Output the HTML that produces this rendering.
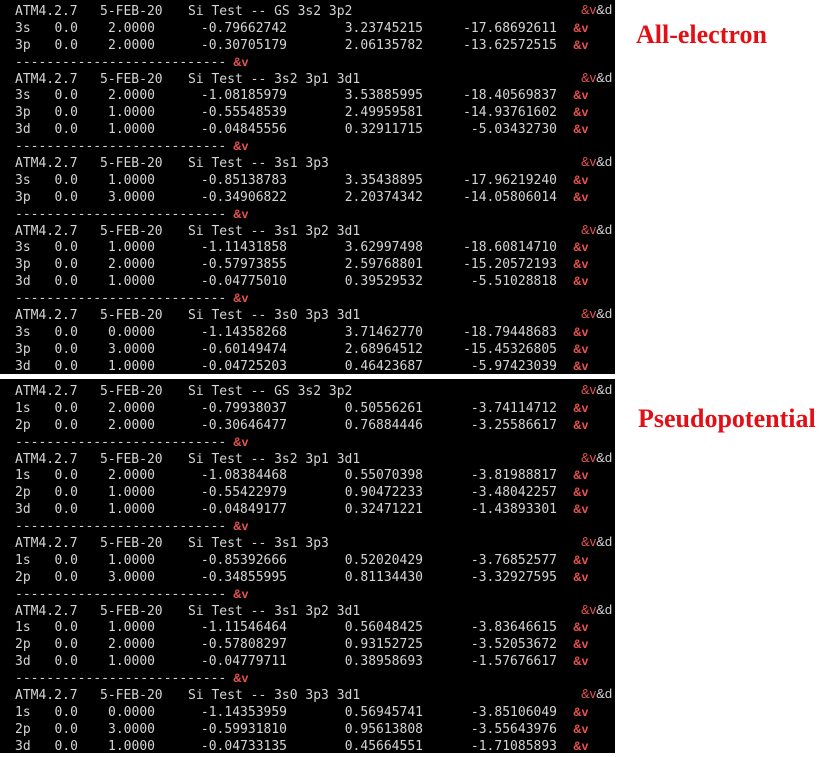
<!DOCTYPE html>
<html><head><meta charset="utf-8"><style>
body{margin:0;background:#fff;width:820px;height:757px;position:relative;overflow:hidden}
.p{position:absolute;left:0;width:615px;background:#000;font:13px "DejaVu Sans Mono","Liberation Mono",monospace;color:#d4d4d4}
.r{position:relative;height:16.9px}
.r i{position:absolute;font-style:normal;top:0;line-height:16px;white-space:pre}
.a{left:15px}.b{right:537px}.c{right:460px}.d{right:328px}.e{right:192px}.f{right:58px}
.r i.v{left:573px;top:-1px;color:#e8534f;font-family:"Liberation Sans",sans-serif;font-weight:bold;font-size:12px}
.h2{left:100px}.h3{left:188px}
.r i.hv{left:581px;top:-2px;font-family:"Liberation Sans",sans-serif;font-size:13px}.hv b{color:#e8534f;font-weight:normal}
.r i.dv{left:233px;top:-1px;color:#e8534f;font-family:"Liberation Sans",sans-serif;font-weight:bold;font-size:12px}
.lab{position:absolute;color:#e30f14;font:bold 26px "Liberation Serif",serif}
</style></head><body>
<div class="p" style="top:0;height:374px;padding-top:4px;box-sizing:border-box">
<div class="r"><i class="a">ATM4.2.7</i><i class="h2">5-FEB-20</i><i class="h3">Si Test -- GS 3s2 3p2</i><i class="hv"><b>&amp;v</b>&amp;d</i></div>
<div class="r"><i class="a">3s</i><i class="b">0.0</i><i class="c">2.0000</i><i class="d">-0.79662742</i><i class="e">3.23745215</i><i class="f">-17.68692611</i><i class="v">&amp;v</i></div>
<div class="r"><i class="a">3p</i><i class="b">0.0</i><i class="c">2.0000</i><i class="d">-0.30705179</i><i class="e">2.06135782</i><i class="f">-13.62572515</i><i class="v">&amp;v</i></div>
<div class="r"><i class="a">---------------------------</i><i class="dv">&amp;v</i></div>
<div class="r"><i class="a">ATM4.2.7</i><i class="h2">5-FEB-20</i><i class="h3">Si Test -- 3s2 3p1 3d1</i><i class="hv"><b>&amp;v</b>&amp;d</i></div>
<div class="r"><i class="a">3s</i><i class="b">0.0</i><i class="c">2.0000</i><i class="d">-1.08185979</i><i class="e">3.53885995</i><i class="f">-18.40569837</i><i class="v">&amp;v</i></div>
<div class="r"><i class="a">3p</i><i class="b">0.0</i><i class="c">1.0000</i><i class="d">-0.55548539</i><i class="e">2.49959581</i><i class="f">-14.93761602</i><i class="v">&amp;v</i></div>
<div class="r"><i class="a">3d</i><i class="b">0.0</i><i class="c">1.0000</i><i class="d">-0.04845556</i><i class="e">0.32911715</i><i class="f">-5.03432730</i><i class="v">&amp;v</i></div>
<div class="r"><i class="a">---------------------------</i><i class="dv">&amp;v</i></div>
<div class="r"><i class="a">ATM4.2.7</i><i class="h2">5-FEB-20</i><i class="h3">Si Test -- 3s1 3p3</i><i class="hv"><b>&amp;v</b>&amp;d</i></div>
<div class="r"><i class="a">3s</i><i class="b">0.0</i><i class="c">1.0000</i><i class="d">-0.85138783</i><i class="e">3.35438895</i><i class="f">-17.96219240</i><i class="v">&amp;v</i></div>
<div class="r"><i class="a">3p</i><i class="b">0.0</i><i class="c">3.0000</i><i class="d">-0.34906822</i><i class="e">2.20374342</i><i class="f">-14.05806014</i><i class="v">&amp;v</i></div>
<div class="r"><i class="a">---------------------------</i><i class="dv">&amp;v</i></div>
<div class="r"><i class="a">ATM4.2.7</i><i class="h2">5-FEB-20</i><i class="h3">Si Test -- 3s1 3p2 3d1</i><i class="hv"><b>&amp;v</b>&amp;d</i></div>
<div class="r"><i class="a">3s</i><i class="b">0.0</i><i class="c">1.0000</i><i class="d">-1.11431858</i><i class="e">3.62997498</i><i class="f">-18.60814710</i><i class="v">&amp;v</i></div>
<div class="r"><i class="a">3p</i><i class="b">0.0</i><i class="c">2.0000</i><i class="d">-0.57973855</i><i class="e">2.59768801</i><i class="f">-15.20572193</i><i class="v">&amp;v</i></div>
<div class="r"><i class="a">3d</i><i class="b">0.0</i><i class="c">1.0000</i><i class="d">-0.04775010</i><i class="e">0.39529532</i><i class="f">-5.51028818</i><i class="v">&amp;v</i></div>
<div class="r"><i class="a">---------------------------</i><i class="dv">&amp;v</i></div>
<div class="r"><i class="a">ATM4.2.7</i><i class="h2">5-FEB-20</i><i class="h3">Si Test -- 3s0 3p3 3d1</i><i class="hv"><b>&amp;v</b>&amp;d</i></div>
<div class="r"><i class="a">3s</i><i class="b">0.0</i><i class="c">0.0000</i><i class="d">-1.14358268</i><i class="e">3.71462770</i><i class="f">-18.79448683</i><i class="v">&amp;v</i></div>
<div class="r"><i class="a">3p</i><i class="b">0.0</i><i class="c">3.0000</i><i class="d">-0.60149474</i><i class="e">2.68964512</i><i class="f">-15.45326805</i><i class="v">&amp;v</i></div>
<div class="r"><i class="a">3d</i><i class="b">0.0</i><i class="c">1.0000</i><i class="d">-0.04725203</i><i class="e">0.46423687</i><i class="f">-5.97423039</i><i class="v">&amp;v</i></div>
</div>
<div class="p" style="top:379px;height:374px;padding-top:5px;box-sizing:border-box">
<div class="r"><i class="a">ATM4.2.7</i><i class="h2">5-FEB-20</i><i class="h3">Si Test -- GS 3s2 3p2</i><i class="hv"><b>&amp;v</b>&amp;d</i></div>
<div class="r"><i class="a">1s</i><i class="b">0.0</i><i class="c">2.0000</i><i class="d">-0.79938037</i><i class="e">0.50556261</i><i class="f">-3.74114712</i><i class="v">&amp;v</i></div>
<div class="r"><i class="a">2p</i><i class="b">0.0</i><i class="c">2.0000</i><i class="d">-0.30646477</i><i class="e">0.76884446</i><i class="f">-3.25586617</i><i class="v">&amp;v</i></div>
<div class="r"><i class="a">---------------------------</i><i class="dv">&amp;v</i></div>
<div class="r"><i class="a">ATM4.2.7</i><i class="h2">5-FEB-20</i><i class="h3">Si Test -- 3s2 3p1 3d1</i><i class="hv"><b>&amp;v</b>&amp;d</i></div>
<div class="r"><i class="a">1s</i><i class="b">0.0</i><i class="c">2.0000</i><i class="d">-1.08384468</i><i class="e">0.55070398</i><i class="f">-3.81988817</i><i class="v">&amp;v</i></div>
<div class="r"><i class="a">2p</i><i class="b">0.0</i><i class="c">1.0000</i><i class="d">-0.55422979</i><i class="e">0.90472233</i><i class="f">-3.48042257</i><i class="v">&amp;v</i></div>
<div class="r"><i class="a">3d</i><i class="b">0.0</i><i class="c">1.0000</i><i class="d">-0.04849177</i><i class="e">0.32471221</i><i class="f">-1.43893301</i><i class="v">&amp;v</i></div>
<div class="r"><i class="a">---------------------------</i><i class="dv">&amp;v</i></div>
<div class="r"><i class="a">ATM4.2.7</i><i class="h2">5-FEB-20</i><i class="h3">Si Test -- 3s1 3p3</i><i class="hv"><b>&amp;v</b>&amp;d</i></div>
<div class="r"><i class="a">1s</i><i class="b">0.0</i><i class="c">1.0000</i><i class="d">-0.85392666</i><i class="e">0.52020429</i><i class="f">-3.76852577</i><i class="v">&amp;v</i></div>
<div class="r"><i class="a">2p</i><i class="b">0.0</i><i class="c">3.0000</i><i class="d">-0.34855995</i><i class="e">0.81134430</i><i class="f">-3.32927595</i><i class="v">&amp;v</i></div>
<div class="r"><i class="a">---------------------------</i><i class="dv">&amp;v</i></div>
<div class="r"><i class="a">ATM4.2.7</i><i class="h2">5-FEB-20</i><i class="h3">Si Test -- 3s1 3p2 3d1</i><i class="hv"><b>&amp;v</b>&amp;d</i></div>
<div class="r"><i class="a">1s</i><i class="b">0.0</i><i class="c">1.0000</i><i class="d">-1.11546464</i><i class="e">0.56048425</i><i class="f">-3.83646615</i><i class="v">&amp;v</i></div>
<div class="r"><i class="a">2p</i><i class="b">0.0</i><i class="c">2.0000</i><i class="d">-0.57808297</i><i class="e">0.93152725</i><i class="f">-3.52053672</i><i class="v">&amp;v</i></div>
<div class="r"><i class="a">3d</i><i class="b">0.0</i><i class="c">1.0000</i><i class="d">-0.04779711</i><i class="e">0.38958693</i><i class="f">-1.57676617</i><i class="v">&amp;v</i></div>
<div class="r"><i class="a">---------------------------</i><i class="dv">&amp;v</i></div>
<div class="r"><i class="a">ATM4.2.7</i><i class="h2">5-FEB-20</i><i class="h3">Si Test -- 3s0 3p3 3d1</i><i class="hv"><b>&amp;v</b>&amp;d</i></div>
<div class="r"><i class="a">1s</i><i class="b">0.0</i><i class="c">0.0000</i><i class="d">-1.14353959</i><i class="e">0.56945741</i><i class="f">-3.85106049</i><i class="v">&amp;v</i></div>
<div class="r"><i class="a">2p</i><i class="b">0.0</i><i class="c">3.0000</i><i class="d">-0.59931810</i><i class="e">0.95613808</i><i class="f">-3.55643976</i><i class="v">&amp;v</i></div>
<div class="r"><i class="a">3d</i><i class="b">0.0</i><i class="c">1.0000</i><i class="d">-0.04733135</i><i class="e">0.45664551</i><i class="f">-1.71085893</i><i class="v">&amp;v</i></div>
</div>
<div class="lab" style="left:636px;top:20px">All-electron</div>
<div class="lab" style="left:638px;top:404px">Pseudopotential</div>
</body></html>
